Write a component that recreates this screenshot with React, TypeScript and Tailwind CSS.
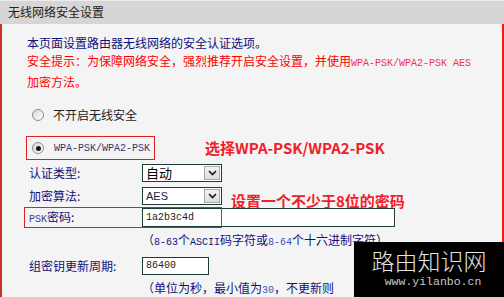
function Radio({ checked = false }: { checked?: boolean }) {
  return (
    <span className="flex h-[12px] w-[12px] shrink-0 items-center justify-center rounded-full border border-[#8c8c8c] bg-gradient-to-br from-[#d8d8d8] to-white">
      {checked && <span className="h-[5px] w-[5px] rounded-full bg-[#141414]" />}
    </span>
  );
}

function Select({ value, mono = false }: { value: string; mono?: boolean }) {
  return (
    <div className="flex h-[18px] w-[80px] items-stretch border border-[#1c3a36] bg-white">
      <span
        className={
          mono
            ? "flex-1 pl-[3px] font-['Liberation_Sans',sans-serif] text-[11px] leading-[16px] text-[#1a1a3a]"
            : 'flex-1 pl-[3px] text-[13px] leading-[16px] text-black'
        }
      >
        {value}
      </span>
      <span className="m-[1px] flex w-[16px] items-center justify-center border border-[#a8a8a8] bg-gradient-to-b from-[#f4f4f4] to-[#dcdcdc]">
        <svg width="9" height="6" viewBox="0 0 9 6">
          <polyline points="1,1 4.5,4.5 8,1" fill="none" stroke="#1a1a1a" strokeWidth="1.6" />
        </svg>
      </span>
    </div>
  );
}

export default function App() {
  return (
    <div className="relative flex h-[297px] w-[504px] flex-col overflow-hidden bg-[#f4f4f4] font-['Noto_Sans_CJK_SC',sans-serif]">
      <div className="h-[24px] shrink-0 border-t border-[#ececec] bg-[#d6d6d6] pl-[8px] text-[12px] leading-[22px] text-[#222]">
        无线网络安全设置
      </div>

      <div className="flex flex-1 flex-col border-l-2 border-r-2 border-l-[#c8302c] border-r-[#ee1c1c] pl-[25px] pt-[10px]">
        <div className="text-[12px] leading-[18px]">
          <p className="text-[#10107a]">本页面设置路由器无线网络的安全认证选项。</p>
          <p className="text-[#f00]">
            安全提示：为保障网络安全，强烈推荐开启安全设置，并使用
            <span className="font-['Liberation_Mono',monospace] text-[10px] text-[#f2304a]">WPA-PSK/WPA2-PSK AES</span>
          </p>
          <p className="text-[#f00]">加密方法。</p>
        </div>

        <div className="mt-[15px] flex h-[18px] items-center gap-[9px] pl-[5px]">
          <Radio />
          <span className="text-[12px] text-[#222]">不开启无线安全</span>
        </div>

        <div className="mt-[12px] flex items-center">
          <div className="ml-[-1px] flex h-[24px] w-[129px] items-center gap-[10px] border border-[#e02020] pl-[5px]">
            <Radio checked />
            <span className="font-['Liberation_Mono',monospace] text-[10px] text-[#343468]">WPA-PSK/WPA2-PSK</span>
          </div>
          <span className="ml-[50px] text-[15px] font-bold text-[#f0202a]">选择WPA-PSK/WPA2-PSK</span>
        </div>

        <div className="mt-[4px] flex h-[18px] items-center">
          <span className="w-[115px] pl-[2px] text-[12px] text-[#10107a]">认证类型:</span>
          <Select value="自动" />
        </div>

        <div className="mt-[5px] flex h-[18px] items-center">
          <span className="w-[115px] pl-[2px] text-[12px] text-[#10107a]">加密算法:</span>
          <Select value="AES" mono />
          <span className="relative top-[5px] ml-[9px] text-[15px] font-bold text-[#f0202a]">设置一个不少于8位的密码</span>
        </div>

        <div className="relative mt-[3px] flex h-[19px] items-center">
          <span className="w-[115px] pl-[2px] text-[12px] text-[#10107a]">
            <span className="font-['Liberation_Mono',monospace] text-[10px] text-[#3a3a8a]">PSK</span>密码:
          </span>
          <div className="h-[19px] w-[253px] border border-[#1c3a36] bg-white pl-[3px] font-['Liberation_Mono',monospace] text-[10px] leading-[17px] text-[#222]">
            1a2b3c4d
          </div>
          <div className="pointer-events-none absolute left-[-3px] top-[-1px] h-[21px] w-[198px] border border-[#e02020]" />
        </div>

        <p className="mt-[5px] self-start pl-[115px] text-[12px] leading-[16px] text-[#10107a]">
          （<span className="font-['Liberation_Mono',monospace] text-[10px]">8-63</span>个
          <span className="font-['Liberation_Mono',monospace] text-[10px]">ASCII</span>码字符或
          <span className="font-['Liberation_Mono',monospace] text-[10px] text-[#3c50c0]">8-64</span>个十六进制字符）
        </p>

        <div className="mt-[6px] flex h-[18px] items-center">
          <span className="w-[115px] pl-[2px] text-[12px] text-[#10107a]">组密钥更新周期:</span>
          <div className="h-[18px] w-[67px] border border-[#1c3a36] bg-white pl-[3px] font-['Liberation_Mono',monospace] text-[10px] leading-[16px] text-[#222]">
            86400
          </div>
        </div>

        <p className="mt-[5px] self-start pl-[115px] text-[12px] leading-[16px] text-[#10107a]">
          （单位为秒，最小值为<span className="font-['Liberation_Mono',monospace] text-[10px] text-[#3c50c0]">30</span>，不更新则
        </p>
      </div>

      <div className="absolute bottom-0 right-0 flex h-[55px] w-[150px] flex-col items-center bg-black pt-[4px]">
        <span className="text-[23px] font-light leading-[28px] text-[#e4e4e4]">路由知识网</span>
        <span className="mt-[1px] pl-[8px] font-['Liberation_Mono',monospace] text-[11.5px] leading-[14px] text-[#c8c8c8]">www.yilanbo.cn</span>
      </div>
    </div>
  );
}
